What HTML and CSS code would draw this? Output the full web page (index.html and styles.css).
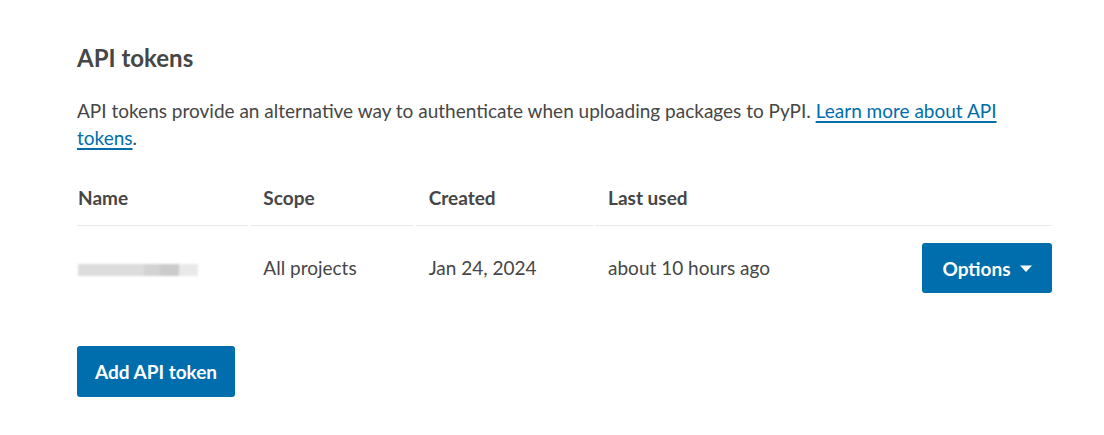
FILE: index.html
```html
<!DOCTYPE html>
<html lang="en">
<head>
<meta charset="utf-8">
<title>API tokens</title>
<link rel="stylesheet" href="styles.css">
</head>
<body>
<section class="panel">
  <h2 class="panel-title">API tokens</h2>
  <p class="panel-text">API tokens provide an alternative way to authenticate when uploading packages to PyPI. <a href="#" class="link">Learn more about API tokens</a>.</p>
  <table class="tokens">
    <colgroup>
      <col class="c-name"><col class="c-scope"><col class="c-created"><col class="c-used"><col class="c-opt">
    </colgroup>
    <thead>
      <tr>
        <th>Name</th>
        <th>Scope</th>
        <th>Created</th>
        <th colspan="2">Last used</th>
      </tr>
    </thead>
    <tbody>
      <tr>
        <td><span class="blur"><span class="b1"></span><span class="b2"></span><span class="b3"></span><span class="b4"></span></span></td>
        <td>All projects</td>
        <td>Jan 24, 2024</td>
        <td>about 10 hours ago</td>
        <td class="opt-cell"><button class="btn btn-options" type="button">Options <svg class="caret" width="12" height="8" viewBox="0 0 12 8"><path d="M0 0.5 L12 0.5 L6 7 Z" fill="#fff"/></svg></button></td>
      </tr>
    </tbody>
  </table>
  <button class="btn btn-add" type="button">Add API token</button>
</section>
</body>
</html>
```
FILE: styles.css
```css
html, body {
  margin: 0;
  padding: 0;
  background: #fff;
}
body {
  font-family: "Lato", "Open Sans", sans-serif;
  color: #464646;
  font-size: 19px;
}
.panel {
  padding: 40px 52px 30px 77px;
}
.panel-title {
  margin: 0;
  font-size: 24px;
  font-weight: 700;
  line-height: 36px;
}
.panel-text {
  margin: 21px 0 0;
  line-height: 27px;
}
.link {
  color: #006dad;
  text-decoration: underline;
  text-underline-offset: 3px;
  text-decoration-thickness: 2px;
}
.tokens {
  margin: 18px 0 0 -2px;
  border-collapse: separate;
  border-spacing: 2px;
  width: 979px;
  table-layout: fixed;
}
.c-name { width: 171px; }
.c-scope { width: 163px; }
.c-created { width: 177px; }
.c-used { width: 324px; }
.c-opt { width: 130px; }
.tokens th {
  text-align: left;
  font-weight: 700;
  padding: 14px 13px;
  line-height: 26px;
  border-bottom: 1px solid #ebebeb;
}
.tokens td {
  padding: 15px 13px;
  line-height: 26px;
  vertical-align: middle;
}
.tokens th:first-child, .tokens td:first-child {
  padding-left: 1px;
}
.tokens th:last-child, .tokens td:last-child {
  padding-right: 0;
}
.opt-cell {
  text-align: right;
  padding-left: 0 !important;
}
.btn {
  font-family: inherit;
  font-size: 19px;
  font-weight: 700;
  color: #fff;
  background: #006dad;
  border: 0;
  border-radius: 3px;
  height: 51px;
  padding: 0;
  white-space: nowrap;
  cursor: pointer;
}
.btn-options {
  width: 130px;
  height: 50px;
  display: inline-flex;
  align-items: center;
  justify-content: center;
  gap: 9px;
}
.caret { display: block; margin-top: 2px; }
.btn-add {
  display: block;
  margin-top: 36px;
  width: 158px;
}
.blur {
  display: inline-flex;
  vertical-align: middle;
  height: 12px;
  filter: blur(1px);
}
.blur span { display: block; height: 12px; }
.b1 { width: 66px; background: #dcdcdc; }
.b2 { width: 16px; background: #d3d3d3; }
.b3 { width: 19px; background: #cbcbcb; }
.b4 { width: 19px; background: #e8e9e8; }
```
